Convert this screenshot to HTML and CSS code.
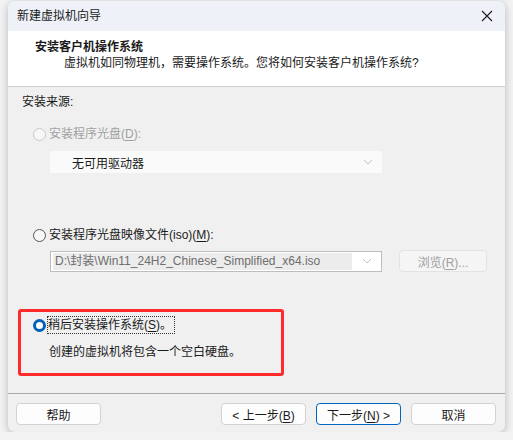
FILE: index.html
```html
<!DOCTYPE html>
<html lang="zh-CN">
<head>
    <meta charset="UTF-8">
    <title>新建虚拟机向导</title>
    <link rel="stylesheet" href="styles.css">
</head>
<body>
    <div class="window">
        <!-- Title bar -->
        <div class="titlebar">
            <span class="title">新建虚拟机向导</span>
            <svg class="close" width="12" height="12" viewBox="0 0 12 12">
                <path d="M1 1 L11 11 M11 1 L1 11" stroke="#1a1a1a" stroke-width="1.1" fill="none"/>
            </svg>
        </div>

        <!-- Header -->
        <div class="header">
            <div class="heading">安装客户机操作系统</div>
            <div class="subheading">虚拟机如同物理机，需要操作系统。您将如何安装客户机操作系统?</div>
        </div>

        <!-- Body -->
        <div class="content">
            <div class="group-label">安装来源:</div>

            <div class="option option-disc">
                <span class="radio disabled"></span>
                <span class="label disabled-text">安装程序光盘(<u>D</u>):</span>
            </div>
            <div class="combo combo-flat">
                <span class="combo-text">无可用驱动器</span>
                <svg class="chevron" width="10" height="6" viewBox="0 0 10 6">
                    <path d="M1 1 L5 5 L9 1" stroke="#c4c4c4" stroke-width="1" fill="none"/>
                </svg>
            </div>

            <div class="option option-iso">
                <span class="radio"></span>
                <span class="label">安装程序光盘映像文件(iso)(<u>M</u>):</span>
            </div>
            <div class="iso-row">
                <div class="combo combo-box">
                    <span class="combo-field">D:\封装\Win11_24H2_Chinese_Simplified_x64.iso</span>
                    <svg class="chevron" width="10" height="6" viewBox="0 0 10 6">
                        <path d="M1 1 L5 5 L9 1" stroke="#c4c4c4" stroke-width="1" fill="none"/>
                    </svg>
                </div>
                <button class="btn btn-disabled">浏览(<u>R</u>)...</button>
            </div>

            <div class="highlight">
                <div class="option option-later">
                    <span class="radio checked"></span>
                    <span class="label focus">稍后安装操作系统(<u>S</u>)。</span>
                </div>
                <div class="desc">创建的虚拟机将包含一个空白硬盘。</div>
            </div>
        </div>

        <!-- Footer -->
        <div class="footer">
            <button class="btn">帮助</button>
            <div class="spacer"></div>
            <button class="btn">&lt; 上一步(<u>B</u>)</button>
            <button class="btn btn-default">下一步(<u>N</u>) &gt;</button>
            <button class="btn">取消</button>
        </div>
    </div>
</body>
</html>
```

FILE: styles.css
```css
body {
    margin: 0;
    background-color: #f3f3f3;
    font-family: "Liberation Sans", "Noto Sans CJK SC", sans-serif;
    font-size: 12px;
    color: #1a1a1a;
}
.window {
    margin: 1px 0 0 8px;
    width: 497px;
    height: 431px;
    background-color: #f0f0f0;
    border-radius: 7px;
    box-shadow: 0 2px 8px rgba(0, 0, 0, 0.25);
    display: flex;
    flex-direction: column;
    overflow: hidden;
}
.titlebar {
    height: 30px;
    background-color: #eef2f8;
    display: flex;
    align-items: center;
    padding: 0 9px;
}
.title {
    flex: 1;
    line-height: 14px;
}
.close {
    margin-right: 3px;
}
.header {
    height: 56px;
    background-color: #ffffff;
    border-bottom: 1px solid #d0d0d0;
    box-sizing: border-box;
    padding: 8px 0 0 27px;
}
.heading {
    font-weight: bold;
    line-height: 16px;
}
.subheading {
    padding-left: 29px;
    line-height: 16px;
}
.content {
    flex: 1;
    padding: 7px 0 0 14px;
}
.group-label {
    line-height: 16px;
}
.option {
    display: flex;
    align-items: center;
    gap: 3px;
    padding-left: 11px;
    line-height: 16px;
}
.option-disc {
    margin-top: 16px;
}
.option-iso {
    margin-top: 54px;
}
.radio {
    width: 11px;
    height: 11px;
    border: 1px solid #555555;
    border-radius: 50%;
    background-color: #f8f8f8;
    flex: none;
}
.radio.disabled {
    border-color: #c9c9c9;
    background-color: #f7f7f7;
}
.radio.checked {
    width: 7px;
    height: 7px;
    border: 3px solid #005fb8;
    background-color: #ffffff;
}
.disabled-text {
    color: #a0a0a0;
}
u {
    text-decoration-thickness: 1px;
    text-underline-offset: 2px;
}
.combo {
    width: 332px;
    height: 22px;
    box-sizing: border-box;
    display: flex;
    align-items: center;
    margin-left: 28px;
}
.combo-flat {
    margin-top: 9px;
    background-color: #fafafa;
    padding: 0 9px 0 22px;
}
.combo-text {
    flex: 1;
}
.iso-row {
    display: flex;
    align-items: center;
    margin-top: 7px;
}
.combo-box {
    height: 21px;
    background-color: #ffffff;
    border: 1px solid #bdbdbd;
    padding: 0 9px 0 2px;
}
.combo-field {
    flex: 1;
    margin-right: 10px;
    background-color: #ececec;
    color: #6e6e6e;
    line-height: 17px;
    padding-left: 2px;
    white-space: nowrap;
    overflow: hidden;
}
.btn {
    width: 85px;
    height: 22px;
    font-family: inherit;
    font-size: 12px;
    color: #1a1a1a;
    background-color: #fdfdfd;
    border: 1px solid #d2d2d2;
    border-radius: 4px;
    padding: 0;
}
.btn-disabled {
    margin-left: 17px;
    width: 88px;
    color: #a0a0a0;
    background-color: #f5f5f5;
    border-color: #e3e3e3;
}
.btn-default {
    border-color: #0067c0;
}
.highlight {
    margin: 37px 0 0 -4px;
    width: 266px;
    height: 67px;
    box-sizing: border-box;
    border: 3px solid #ff2b2b;
    border-radius: 3px;
    padding-top: 5px;
}
.highlight .option {
    padding-left: 12px;
    gap: 2px;
}
.focus {
    outline: 1px dotted #333333;
    outline-offset: 0;
    padding-right: 2px;
}
.desc {
    padding: 11px 0 0 28px;
    line-height: 16px;
}
.footer {
    height: 39px;
    border-top: 1px solid #a8a8a8;
    box-sizing: border-box;
    display: flex;
    align-items: flex-start;
    gap: 10px;
    padding: 9px 9px 0 8px;
}
.spacer {
    flex: 1;
}
```
